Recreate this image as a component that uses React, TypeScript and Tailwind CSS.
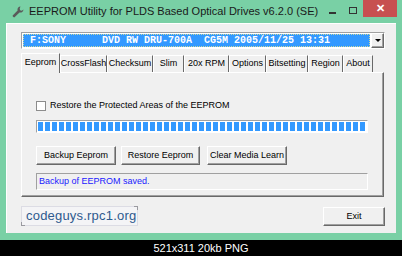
import { FC } from "react";

const tabs: { label: string; w: string }[] = [
  { label: "CrossFlash", w: "w-[47px]" },
  { label: "Checksum", w: "w-[46px]" },
  { label: "Slim", w: "w-[31px]" },
  { label: "20x RPM", w: "w-[45px]" },
  { label: "Options", w: "w-[37px]" },
  { label: "Bitsetting", w: "w-[42px]" },
  { label: "Region", w: "w-[35px]" },
  { label: "About", w: "w-[30px]" },
];

const raised =
  "border border-t-white border-l-white border-r-[#696969] border-b-[#696969] shadow-[inset_-1px_-1px_0_#a0a0a0]";

const Wrench: FC = () => (
  <svg width="12" height="12" viewBox="0 0 12 12">
    <path
      d="M8.5 0.6a3 3 0 0 0-2.9 3.9L0.9 9.2a1 1 0 0 0 0 1.4l0.5 0.5a1 1 0 0 0 1.4 0l4.7-4.7a3 3 0 0 0 3.9-2.9l-1.6 1.2-1.7-0.4-0.4-1.7z"
      fill="#5a5a5a"
    />
  </svg>
);

const Button: FC<{ label: string; w: string }> = ({ label, w }) => (
  <div
    className={`${w} h-[19px] flex items-center justify-center bg-[#f0f0f0] text-[9px] text-black ${raised}`}
  >
    {label}
  </div>
);

export default function App() {
  const segments = Array.from({ length: 47 });
  return (
    <div className="w-[402px] h-[256px] bg-black flex flex-col font-['Liberation_Sans',Arial,sans-serif]">
      <div className="h-[240px] bg-[#79d0a5] px-[6px] flex flex-col">
        {/* title bar */}
        <div className="h-[23px] flex items-center relative">
          <div className="ml-[6px] mt-[1px] shrink-0">
            <Wrench />
          </div>
          <span className="ml-[5px] text-[11px] text-[#1a1a1a] whitespace-nowrap shrink-0">
            EEPROM Utility for PLDS Based Optical Drives v6.2.0 (SE)
          </span>
          <div className="flex-1" />
          <div className="w-[7px] h-[2px] bg-[#333] mt-[2px] mr-[13px] shrink-0" />
          <div className="w-[8px] h-[7px] border border-[#333] mr-[6px] mb-[2px] shrink-0" />
          <div className="w-[34px] h-[17px] bg-[#c75050] self-start flex items-center justify-center text-white text-[11px] font-bold mr-[-1px] shrink-0">
            ✕
          </div>
        </div>

        {/* client */}
        <div className="h-[210px] bg-[#f0f0f0] border-l border-t border-white pl-[14px] pr-[11px] pt-[8px] flex flex-col">
          {/* combo */}
          <div className="h-[17px] flex border border-t-[#a0a0a0] border-l-[#a0a0a0] border-r-white border-b-white bg-white">
            <div className="flex-1 m-[1px] bg-[#3399ff] border border-dotted border-[#c8d8a0] flex items-center pl-[6px]">
              <span className="font-['Liberation_Mono',monospace] font-bold text-[10px] text-white whitespace-pre leading-none">
                F:SONY      DVD RW DRU-700A  CG5M 2005/11/25 13:31
              </span>
            </div>
            <div className={`w-[13px] bg-[#f0f0f0] flex items-center justify-center ${raised}`}>
              <div className="w-0 h-0 border-l-[3px] border-r-[3px] border-t-[3px] border-l-transparent border-r-transparent border-t-black" />
            </div>
          </div>

          {/* tabs */}
          <div className="mt-[4px] h-[19px] flex items-end relative z-10">
            <div className="w-[39px] h-[20px] bg-[#f0f0f0] border-l border-t border-white border-r border-r-[#696969] flex items-center justify-center text-[9px] text-black mb-[-1px] pb-[1px]">
              Eeprom
            </div>
            {tabs.map((t) => (
              <div
                key={t.label}
                className={`${t.w} h-[17px] border-t border-l border-white border-r border-r-[#696969] flex items-center justify-center text-[9px] text-black`}
              >
                {t.label}
              </div>
            ))}
          </div>

          {/* panel */}
          <div className="w-[363px] h-[125px] border border-t-white border-l-white border-r-[#696969] border-b-[#696969] shadow-[inset_-1px_-1px_0_#a0a0a0] pl-[14px] pt-[27px] flex flex-col">
            <div className="flex items-center h-[11px]">
              <div className="w-[10px] h-[10px] bg-white border border-[#8c8c8c]" />
              <span className="ml-[4px] text-[9px] text-black">
                Restore the Protected Areas of the EEPROM
              </span>
            </div>
            <div className="mt-[9px] w-[332px] h-[13px] border border-t-[#a0a0a0] border-l-[#a0a0a0] border-r-white border-b-white bg-white flex gap-[2px] px-[1px] py-[1px] overflow-hidden">
              {segments.map((_, i) => (
                <div key={i} className="w-[5px] shrink-0 h-full bg-[#3399ff]" />
              ))}
            </div>
            <div className="mt-[13px] flex gap-[5px]">
              <Button label="Backup Eeprom" w="w-[80px]" />
              <Button label="Restore Eeprom" w="w-[79px]" />
              <div className="ml-[2px]">
                <Button label="Clear Media Learn" w="w-[80px]" />
              </div>
            </div>
            <div className="mt-[8px] w-[332px] h-[17px] border border-t-[#a0a0a0] border-l-[#a0a0a0] border-r-white border-b-white flex items-center pl-[2px]">
              <span className="text-[9px] text-[#1a1aff]">Backup of EEPROM saved.</span>
            </div>
          </div>

          {/* bottom row */}
          <div className="mt-[9px] flex items-start">
            <div className="w-[117px] h-[20px] border border-[#dcdce4] bg-[#f4f4f6] flex items-center pl-[4px] relative">
              <span className="text-[13px] text-[#2f5a8e] tracking-[0.2px]">codeguys.rpc1.org</span>
              <div className="absolute right-[-1px] top-[-1px] w-[4px] h-[4px] border-t border-r border-[#9a9aa0]" />
              <div className="absolute left-[-1px] bottom-[-1px] w-[4px] h-[4px] border-b border-l border-[#9a9aa0]" />
            </div>
            <div className="flex-1" />
            <div className="mt-[1px]">
              <Button label="Exit" w="w-[62px]" />
            </div>
          </div>
        </div>
      </div>
      <div className="h-[16px] flex items-center justify-center text-white text-[11px]">
        521x311 20kb PNG
      </div>
    </div>
  );
}
